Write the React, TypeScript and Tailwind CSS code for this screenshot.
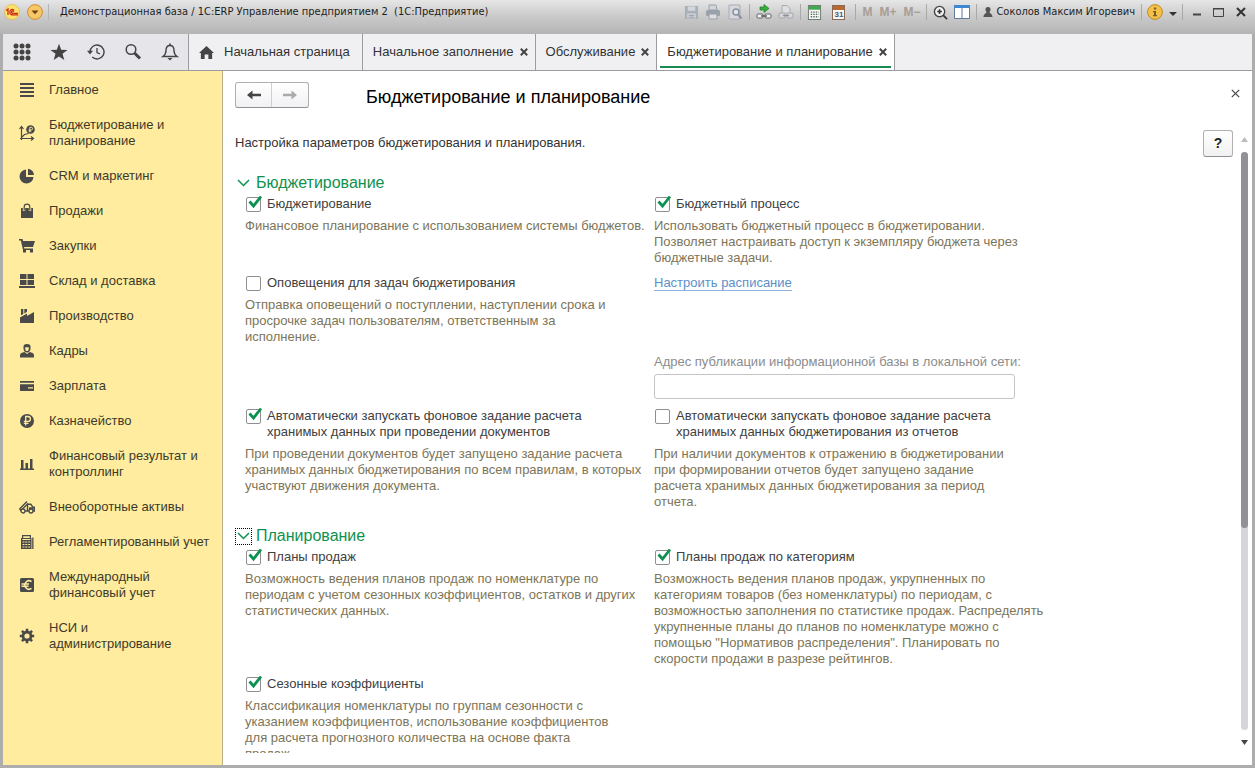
import type { ReactNode } from "react";

const dark = "#4a4a4a";

function Svg({ size = 16, box = 16, children }: { size?: number; box?: number; children: ReactNode }) {
  return (
    <svg width={size} height={size} viewBox={`0 0 ${box} ${box}`} fill="none" className="shrink-0" aria-hidden="true">
      {children}
    </svg>
  );
}

const MENU: { label: string; icon: ReactNode }[] = [
  { label: "Главное", icon: <path d="M1 1h14v2H1zM1 5h14v2H1zM1 9h14v2H1zM1 13h14v2H1z" fill={dark} /> },
  {
    label: "Бюджетирование и\nпланирование",
    icon: (
      <>
        <path d="M2.500 15V2M.5 4l2-2.500 2 2.500M1 13.500h13M12 11.500l2.500 2-2.500 2M3 12l2.500-2.500 4-1" stroke={dark} strokeWidth="1.200" />
        <circle cx="11.500" cy="4.500" r="4.300" fill={dark} />
        <path d="M10.800 7.200V2.300h1.400a1.300 1.300 0 0 1 0 2.700H9.600M9.600 6.200h2.600" stroke="#ffec9e" strokeWidth=".9" />
      </>
    ),
  },
  {
    label: "CRM и маркетинг",
    icon: (
      <>
        <path d="M7 1.500A7 7 0 1 0 14.500 9H7z" fill={dark} />
        <path d="M9 .8a7 7 0 0 1 6 6.200H9z" fill={dark} />
      </>
    ),
  },
  {
    label: "Продажи",
    icon: (
      <>
        <path d="M2 5h12v10H2z" fill={dark} />
        <path d="M5 8V4a3 3 0 0 1 6 0v4" stroke="#ffec9e" strokeWidth="2.400" />
        <path d="M5.200 7.500V4a2.800 2.800 0 0 1 5.600 0v3.500" stroke={dark} strokeWidth="1.200" />
      </>
    ),
  },
  {
    label: "Закупки",
    icon: (
      <>
        <path d="M0 1h3.500l.6 2H16l-2 6H5l.4 1.500H14V12H4L1.800 2.500H0z" fill={dark} />
        <path d="M4 11h3v3.500H4zM11 11h3v3.500h-3z" fill={dark} />
      </>
    ),
  },
  { label: "Склад и доставка", icon: <path d="M1 1h6.500v5H1zM8.500 1H15v5H8.500zM1 7h6.500v5H1zM8.500 7H15v5H8.500zM0 13h16v2H0z" fill={dark} /> },
  { label: "Производство", icon: <path d="M1 9.500l7-4V8l7-4v11H1zM2 1h2.300v5L2 7.300zM5.300 1H8v2.800L5.300 5.400z" fill={dark} /> },
  {
    label: "Кадры",
    icon: (
      <>
        <path d="M4.500 3.500C4.500 1.800 6 1 8 1s3.500.8 3.500 2.500v2C11.500 8 9.800 9.500 8 9.500S4.500 8 4.500 5.500z" fill={dark} />
        <path d="M6.200 4.300h3.600v1.400C9.800 7.200 9 8 8 8s-1.800-.8-1.800-2.300z" fill="#ffec9e" />
        <path d="M1 14.500V12.200c0-1.800 2-2.700 4.500-3.200L8 11l2.500-2c2.500.5 4.500 1.400 4.500 3.200v2.300z" fill={dark} />
      </>
    ),
  },
  { label: "Зарплата", icon: <path d="M1 3h14v1.800H1zM1 6.300h14V13H1zM9 9.300v1.200h5V9.300z" fill={dark} fillRule="evenodd" /> },
  {
    label: "Казначейство",
    icon: (
      <>
        <circle cx="8" cy="8" r="7" fill={dark} />
        <path d="M6.700 12.500v-9H9a2.400 2.400 0 0 1 0 4.900H4.800M4.800 10.300h4.700" stroke="#ffec9e" strokeWidth="1.300" />
      </>
    ),
  },
  { label: "Финансовый результат и\nконтроллинг", icon: <path d="M1 12.500h14V14H1zM2 4h2.500v9H2zM6.500 7H9v6H6.500zM11 3h2.500v10H11z" fill={dark} /> },
  {
    label: "Внеоборотные активы",
    icon: (
      <>
        <path d="M.5 10L8 2.500M2.500 11L9 4.500M.5 10l2 2" stroke={dark} strokeWidth="1.400" />
        <path d="M8.500 12V5.200h3.300l2 3H15.300V12H6" stroke={dark} strokeWidth="1.400" />
        <path d="M10 8.300h4.500V11H10z" fill={dark} />
        <circle cx="4" cy="12" r="2" fill="#ffec9e" stroke={dark} strokeWidth="1.300" />
        <circle cx="12" cy="12" r="2" fill="#ffec9e" stroke={dark} strokeWidth="1.300" />
      </>
    ),
  },
  {
    label: "Регламентированный учет",
    icon: (
      <>
        <path d="M3.600 4V1.600h7.800V4" stroke={dark} strokeWidth="1.200" />
        <path d="M2 4h10.500v11H2zM13.200 3.500h1.300V15h-1.300z" fill={dark} />
        <path d="M3.300 5.500h8M3.500 8h2M6.300 8h2M9.200 8h2M3.500 10.500h2M6.300 10.500h2M9.200 10.500h2M3.500 13h2M6.300 13h2M9.200 13h2" stroke="#ffec9e" strokeWidth="1.200" />
      </>
    ),
  },
  {
    label: "Международный\nфинансовый учет",
    icon: (
      <>
        <rect x="1" y="1" width="14" height="14" rx="1.500" fill={dark} />
        <path d="M12.500 4.600A4.200 4.200 0 1 0 12.500 11.400M2.500 7h7.500M2.500 9.200h7" stroke="#ffec9e" strokeWidth="1.500" />
      </>
    ),
  },
  {
    label: "НСИ и\nадминистрирование",
    icon: (
      <>
        <circle cx="8" cy="8" r="4" stroke={dark} strokeWidth="2.800" />
        <path d="M8 .8v2.500M8 12.700v2.500M.8 8h2.500M12.700 8h2.500M2.900 2.900l1.800 1.800M11.300 11.300l1.800 1.800M2.900 13.100l1.800-1.800M11.300 4.700l1.800-1.800" stroke={dark} strokeWidth="2.500" />
      </>
    ),
  },
];

function CloseGlyph() {
  return (
    <svg width="8" height="8" viewBox="0 0 8 8" aria-hidden="true">
      <path d="M.8.8l6.400 6.400M7.200.8L.8 7.200" stroke="#444" strokeWidth="2" />
    </svg>
  );
}

function Separator() {
  return <span className="h-4 w-px bg-[#a9a9a9]" />;
}

function TitleBar() {
  return (
    <header className="flex h-[34px] shrink-0 items-start bg-linear-to-b from-[#e6e6e6] via-[#c9c9c9] to-[#b4b4b4] px-1 text-[11px] text-[#1d1d1d]">
      <div className="flex h-6 w-full items-center">
        <svg width="16" height="16" viewBox="0 0 16 16" aria-hidden="true">
          <circle cx="8" cy="8" r="7.500" fill="#fbe36b" stroke="#e0b040" strokeWidth=".6" />
          <path d="M2 6.500l2-1.500v6M10 6.300C8.500 4.500 5.800 5.500 5.800 8s2 3 3.200 2.800h5M9.800 7.600c-.8-1-2.300-.6-2.300.5 0 .9.700 1.200 1.500 1.200h5" fill="none" stroke="#cf2a1c" strokeWidth="1.300" />
        </svg>
        <button type="button" aria-label="Главное меню" className="ml-[7px]">
          <svg width="16" height="16" viewBox="0 0 16 16">
            <circle cx="8" cy="8" r="7.400" fill="#f8c567" stroke="#c98f33" />
            <path d="M4.500 6.500h7L8 10.300z" fill="#6b4310" />
          </svg>
        </button>
        <span className="ml-[5px] h-4 w-px bg-[#b5b5b5]" />
        <span className="ml-[11px] font-['DejaVu_Sans_Condensed','DejaVu_Sans',sans-serif] whitespace-pre">
          Демонстрационная база / 1С:ERP Управление предприятием 2  (1С:Предприятие)
        </span>
        <div className="ml-auto flex items-center gap-1.5">
          <button type="button" aria-label="Сохранить">
            <Svg size={15}>
              <path d="M1 1h14v14H1z" fill="#a9b0b8" />
              <path d="M4 1.500h8v4.500H4zM3.500 9h9v5h-9z" fill="#d3d6da" />
              <path d="M5 11h6M5 13h6" stroke="#9199a2" />
            </Svg>
          </button>
          <button type="button" aria-label="Печать">
            <Svg size={16}>
              <path d="M4 1h7l1 5H4z" fill="#d3d6da" stroke="#9aa1a9" />
              <rect x="1" y="6" width="14" height="6" rx="1.500" fill="#9aa1a9" />
              <path d="M4 10h8v5H4z" fill="#dcdee1" stroke="#9aa1a9" />
            </Svg>
          </button>
          <button type="button" aria-label="Просмотр">
            <Svg size={16}>
              <path d="M2 1h11v14H2z" fill="#d6d8db" stroke="#a7adb4" />
              <circle cx="9" cy="8" r="3" fill="#dfe5ea" stroke="#8a939d" strokeWidth="1.500" />
              <path d="M11 10.500l3.500 4" stroke="#8a939d" strokeWidth="2" />
            </Svg>
          </button>
          <Separator />
          <button type="button" aria-label="Получить ссылку">
            <Svg size={16}>
              <path d="M4 3h4V.5L13 4.500 8 8.500V6H4z" fill="#37ad3c" stroke="#1e7d27" strokeWidth=".7" />
              <rect x="1" y="10" width="6" height="4" rx="1" fill="#f3f3f3" stroke="#666" />
              <rect x="9" y="10" width="6" height="4" rx="1" fill="#f3f3f3" stroke="#666" />
              <path d="M5 12h6" stroke="#555" strokeWidth="1.300" />
            </Svg>
          </button>
          <button type="button" aria-label="Перейти по ссылке">
            <Svg size={16}>
              <path d="M4 8V1.500h5l3 3V8" fill="#dedfe1" stroke="#a7acb2" />
              <rect x="1" y="9" width="6" height="5" rx="1" fill="#d6d8db" stroke="#a0a6ad" />
              <rect x="9" y="9" width="6" height="5" rx="1" fill="#d6d8db" stroke="#a0a6ad" />
              <path d="M5 11.500h6" stroke="#909090" strokeWidth="1.300" />
            </Svg>
          </button>
          <Separator />
          <button type="button" aria-label="Калькулятор">
            <Svg size={15}>
              <rect x="1.500" y=".5" width="13" height="15" fill="#f5f5f5" stroke="#6c756c" />
              <path d="M2 1h12v4H2z" fill="#3daa50" />
              <path d="M4 7.500h8.500M4 10h8.500M4 12.500h8.500" stroke="#4f6b57" strokeWidth="1.400" strokeDasharray="1.500 1.200" />
            </Svg>
          </button>
          <button type="button" aria-label="Календарь" className="mx-1 flex h-[15px] w-[13px] flex-col border border-[#8b6b55] bg-[#f7f7f7]">
            <span className="h-[4px] w-full bg-[#b8672f]" />
            <span className="w-full text-center text-[8px]/[9px] font-bold text-[#44597a]">31</span>
          </button>
          <Separator />
          <span className="flex gap-[7px] font-['Liberation_Sans',sans-serif] text-[12px] font-bold text-[#a89d93]">
            <button type="button">M</button>
            <button type="button">M+</button>
            <button type="button">M−</button>
          </span>
          <Separator />
          <button type="button" aria-label="Масштаб">
            <Svg size={15}>
              <circle cx="7" cy="7" r="5.500" fill="#f0f0f0" stroke="#444" strokeWidth="1.500" />
              <path d="M4.500 7h5M7 4.500v5M11 11l4 4" stroke="#333" strokeWidth="1.700" />
            </Svg>
          </button>
          <button type="button" aria-label="Панели">
            <Svg size={16}>
              <path d="M.5 1.500h15v13H.5z" fill="#fff" stroke="#5d7b9b" />
              <path d="M0 1h16v3H0z" fill="#3f87cf" />
              <path d="M8 4v11" stroke="#5d7b9b" />
            </Svg>
          </button>
          <Separator />
          <button type="button" className="flex items-center gap-[3px] font-['DejaVu_Sans_Condensed','DejaVu_Sans',sans-serif] whitespace-nowrap">
            <Svg size={10} box={10}>
              <path d="M5 0c2 0 2.500 1.300 2.500 2.500S6.500 5 6.500 5.500 9.500 7 9.500 10H.5c0-3 3-4 3-4.500s-1-1.500-1-3S3 0 5 0z" fill="#555" />
            </Svg>
            Соколов Максим Игоревич
          </button>
          <div className="flex items-center gap-[5px]">
            <Separator />
            <button type="button" aria-label="Информация" className="flex items-center gap-1.5">
              <Svg size={16}>
                <circle cx="8" cy="8" r="7.400" fill="#f5c044" stroke="#bb8b2b" />
                <path d="M7 3.500h2.200v2H7zM6 7h3v4h1v1.300H6V11h1V8.200H6z" fill="#735d35" />
              </Svg>
              <Svg size={8} box={8}>
                <path d="M0 4h8L4 8z" fill="#333" />
              </Svg>
            </button>
            <Separator />
          </div>
          <div className="flex items-center gap-3 pr-[5px] pl-1">
            <button type="button" aria-label="Свернуть">
              <Svg size={8} box={8}>
                <path d="M0 5.500h8v2H0z" fill="#444" />
              </Svg>
            </button>
            <button type="button" aria-label="Развернуть">
              <Svg size={11} box={11}>
                <path d="M.5 1.500h10v8H.5z" stroke="#444" />
                <path d="M0 1h11v1.500H0z" fill="#444" />
              </Svg>
            </button>
            <button type="button" aria-label="Закрыть">
              <Svg size={10} box={10}>
                <path d="M1 1l8 8M9 1L1 9" stroke="#333" strokeWidth="2" />
              </Svg>
            </button>
          </div>
        </div>
      </div>
    </header>
  );
}

function ToolButton({ label, children }: { label: string; children: ReactNode }) {
  return (
    <button type="button" aria-label={label} className="flex w-[37px] items-center justify-center">
      <Svg size={18} box={18}>
        {children}
      </Svg>
    </button>
  );
}

const TABS = ["Начальное заполнение", "Обслуживание", "Бюджетирование и планирование"];

function TabBar() {
  return (
    <nav className="flex h-[37px] shrink-0 border-b border-[#9c9ca0] bg-[#f0f0f3] text-[13px] text-[#333]">
      <div className="flex border-r border-[#9c9ca0] bg-[#e6e6ea]">
        <ToolButton label="Разделы">
          {[3, 9, 15].map((y) => [3, 9, 15].map((x) => <circle key={`${x}-${y}`} cx={x} cy={y} r="2.500" fill="#444" />))}
        </ToolButton>
        <ToolButton label="Избранное">
          <path d="M9 .8l2.200 5.900 6.300.2-5 3.900 1.800 6.100L9 13.400l-5.300 3.500 1.800-6.100-5-3.900 6.300-.2z" fill="#444" />
        </ToolButton>
        <ToolButton label="История">
          <path d="M3 9a7 7 0 1 1 2.200 5.100" stroke="#444" strokeWidth="1.400" />
          <path d="M0 7.700h6L3 11.500z" fill="#444" />
          <path d="M10 5v4.500l3 1.500" stroke="#444" strokeWidth="1.300" />
        </ToolButton>
        <ToolButton label="Поиск">
          <circle cx="7" cy="6.500" r="4.800" stroke="#444" strokeWidth="1.500" />
          <path d="M10.500 10l5.500 5.500" stroke="#444" strokeWidth="3" />
        </ToolButton>
        <ToolButton label="Уведомления">
          <path d="M9 2.500c3 0 4 2.500 4 5 0 3 1 4.500 3 6H2c2-1.500 3-3 3-6 0-2.500 1-5 4-5z" stroke="#444" strokeWidth="1.400" />
          <path d="M9 .5v2" stroke="#444" strokeWidth="1.600" />
          <path d="M6.500 15h5L9 17.500z" fill="#444" />
        </ToolButton>
      </div>
      <button type="button" className="flex items-center gap-2.5 border-r border-[#9c9ca0] pr-3 pl-2.5 whitespace-nowrap">
        <Svg size={15}>
          <path d="M8 1l8 7.500h-2V15h-4v-5H6v5H2V8.500H0z" fill="#444" />
        </Svg>
        Начальная страница
      </button>
      {TABS.map((tab, i) => {
        const active = i === TABS.length - 1;
        return (
          <div
            key={tab}
            className={
              active
                ? "relative flex items-center gap-1.5 border-r border-[#9c9ca0] bg-white pr-[7px] pl-2.5"
                : "flex items-center gap-1.5 border-r border-[#9c9ca0] pr-[7px] pl-2.5"
            }
          >
            <button type="button" className="whitespace-nowrap">
              {tab}
            </button>
            <button type="button" aria-label={`Закрыть: ${tab}`}>
              <CloseGlyph />
            </button>
            {active && <span className="absolute inset-x-[3px] bottom-[2px] h-[2px] bg-[#1a8a50]" />}
          </div>
        );
      })}
    </nav>
  );
}

function Sidebar() {
  return (
    <aside className="w-[220px] shrink-0 border-r border-[#b9b08a] bg-[#ffec9e] pt-[11px] pl-4">
      <ul className="flex flex-col gap-[19px] text-[13px]/[16px] text-[#3d3a2c]">
        {MENU.map((item) => (
          <li key={item.label}>
            <a href="#" className="flex items-center gap-3.5 whitespace-pre">
              <Svg>{item.icon}</Svg>
              {item.label}
            </a>
          </li>
        ))}
      </ul>
    </aside>
  );
}

function Option({ id, label, hint, checked = false }: { id: string; label: string; hint: string; checked?: boolean }) {
  return (
    <div>
      <div className="flex items-start gap-1.5">
        <span className="relative ml-px flex h-4 w-[15px] shrink-0 items-center">
          <input
            id={id}
            type="checkbox"
            defaultChecked={checked}
            className="peer size-[15px] appearance-none rounded-[2px] border border-[#8f8f8f] bg-white"
          />
          <svg
            width="17"
            height="16"
            viewBox="0 0 17 16"
            fill="none"
            className="pointer-events-none absolute top-[-1px] left-0 hidden peer-checked:block"
            aria-hidden="true"
          >
            <path d="M3.500 6.500l4 4.500L15 1.500" stroke="#0c9152" strokeWidth="2.800" />
          </svg>
        </span>
        <label htmlFor={id} className="whitespace-pre text-[#404040]">
          {label}
        </label>
      </div>
      <p className="mt-1.5 whitespace-pre text-[#7d7558]">{hint}</p>
    </div>
  );
}

function Section({ title, focused = false, children }: { title: string; focused?: boolean; children: ReactNode }) {
  return (
    <section className="mt-4">
      <h2 className="text-[16px]/[20px] text-[#0f9150]">
        <button type="button" className="flex items-center gap-1">
          <span
            className={
              focused
                ? "flex size-[17px] items-center justify-center border border-dotted border-black"
                : "flex size-[17px] items-center justify-center"
            }
          >
            <svg width="13" height="8" viewBox="0 0 13 8" fill="none" className="shrink-0" aria-hidden="true">
              <path d="M1 1l5.500 5.500L12 1" stroke="#0f9150" strokeWidth="1.500" />
            </svg>
          </span>
          {title}
        </button>
      </h2>
      <div className="mt-[3px] grid grid-cols-[409px_minmax(0,1fr)] gap-y-[9px] pl-2.5">{children}</div>
    </section>
  );
}

function Content() {
  return (
    <main className="flex min-w-0 flex-1 flex-col bg-white pt-[11px] pr-1 pb-3 pl-3">
      <div className="flex h-[26px] shrink-0 items-center">
        <div className="flex h-full rounded-[3px] border border-[#b0b0b4] border-b-[#8f8f93] bg-linear-to-b from-white to-[#f1f1f3]">
          <button type="button" aria-label="Назад" className="flex w-9 items-center justify-center border-r border-[#cfcfd2]">
            <svg width="14" height="10" viewBox="0 0 14 10" aria-hidden="true">
              <path d="M0 5l5.500-4.500v3.300H14v2.400H5.500v3.300z" fill="#444" />
            </svg>
          </button>
          <button type="button" aria-label="Вперед" className="flex w-9 items-center justify-center">
            <svg width="14" height="10" viewBox="0 0 14 10" aria-hidden="true">
              <path d="M14 5L8.500.5v3.300H0v2.400h8.500v3.300z" fill="#aaa" />
            </svg>
          </button>
        </div>
        <h1 className="mt-1 ml-[57px] text-[18px]/[24px] whitespace-nowrap text-black">Бюджетирование и планирование</h1>
        <button type="button" aria-label="Закрыть" className="mr-2 mb-1 ml-auto">
          <svg width="9" height="9" viewBox="0 0 9 9" aria-hidden="true">
            <path d="M.8.8l7.400 7.400M8.200.8L.8 8.200" stroke="#444" strokeWidth="1.200" />
          </svg>
        </button>
      </div>

      <div className="mt-[21px] flex min-h-0 flex-1 gap-2">
        <div className="min-w-0 flex-1 overflow-hidden text-[13px]/[16px]">
          <div className="flex h-7 items-center justify-between">
            <p className="text-[#333]">Настройка параметров бюджетирования и планирования.</p>
            <button
              type="button"
              className="h-[27px] w-[30px] rounded-[3px] border border-[#b0b0b4] border-b-[#8f8f93] bg-linear-to-b from-white to-[#f1f1f3] text-[14px] font-bold text-[#222]"
            >
              ?
            </button>
          </div>

          <Section title="Бюджетирование">
            <Option id="budgeting" checked label="Бюджетирование" hint="Финансовое планирование с использованием системы бюджетов." />
            <Option
              id="process"
              checked
              label="Бюджетный процесс"
              hint={"Использовать бюджетный процесс в бюджетировании.\nПозволяет настраивать доступ к экземпляру бюджета через\nбюджетные задачи."}
            />
            <Option
              id="alerts"
              label="Оповещения для задач бюджетирования"
              hint={"Отправка оповещений о поступлении, наступлении срока и\nпросрочке задач пользователям, ответственным за\nисполнение."}
            />
            <div>
              <a href="#" className="inline-block border-b border-[#8fb3dd] leading-[15px] text-[#5b8fc9]">
                Настроить расписание
              </a>
            </div>
            <div className="col-start-2">
              <label htmlFor="address" className="block text-[#8c8c8c]">
                Адрес публикации информационной базы в локальной сети:
              </label>
              <input id="address" type="text" className="mt-1 block h-[25px] w-full max-w-[361px] rounded-[3px] border border-[#c4c4c4] px-1.5" />
            </div>
            <Option
              id="auto-documents"
              checked
              label={"Автоматически запускать фоновое задание расчета\nхранимых данных при проведении документов"}
              hint={"При проведении документов будет запущено задание расчета\nхранимых данных бюджетирования по всем правилам, в которых\nучаствуют движения документа."}
            />
            <Option
              id="auto-reports"
              label={"Автоматически запускать фоновое задание расчета\nхранимых данных бюджетирования из отчетов"}
              hint={"При наличии документов к отражению в бюджетировании\nпри формировании отчетов будет запущено задание\nрасчета хранимых данных бюджетирования за период\nотчета."}
            />
          </Section>

          <Section title="Планирование" focused>
            <Option
              id="sales-plans"
              checked
              label="Планы продаж"
              hint={"Возможность ведения планов продаж по номенклатуре по\nпериодам с учетом сезонных коэффициентов, остатков и других\nстатистических данных."}
            />
            <Option
              id="category-plans"
              checked
              label="Планы продаж по категориям"
              hint={"Возможность ведения планов продаж, укрупненных по\nкатегориям товаров (без номенклатуры) по периодам, с\nвозможностью заполнения по статистике продаж. Распределять\nукрупненные планы до планов по номенклатуре можно с\nпомощью \"Нормативов распределения\". Планировать по\nскорости продажи в разрезе рейтингов."}
            />
            <Option
              id="seasonal"
              checked
              label="Сезонные коэффициенты"
              hint={"Классификация номенклатуры по группам сезонности с\nуказанием коэффициентов, использование коэффициентов\nдля расчета прогнозного количества на основе факта\nпродаж."}
            />
          </Section>
        </div>

        <div className="flex w-[7px] shrink-0 flex-col items-center pt-2 pb-2">
          <svg width="7" height="5" viewBox="0 0 7 5" aria-hidden="true">
            <path d="M0 5h7L3.500 0z" fill="#bdbdbd" />
          </svg>
          <div className="my-2.5 w-full flex-1 rounded-full bg-[#d6d6da]">
            <div className="h-[65%] w-full rounded-full bg-[#929296]" />
          </div>
          <svg width="7" height="5" viewBox="0 0 7 5" aria-hidden="true">
            <path d="M0 0h7L3.500 5z" fill="#444" />
          </svg>
        </div>
      </div>
    </main>
  );
}

export default function App() {
  return (
    <div className="flex h-screen flex-col overflow-hidden bg-[#adadad] font-['Liberation_Sans',Arial,sans-serif]">
      <TitleBar />
      <div className="mr-[3px] mb-[3px] ml-[3px] flex min-h-0 flex-1 flex-col">
        <TabBar />
        <div className="flex min-h-0 flex-1">
          <Sidebar />
          <Content />
        </div>
      </div>
    </div>
  );
}
